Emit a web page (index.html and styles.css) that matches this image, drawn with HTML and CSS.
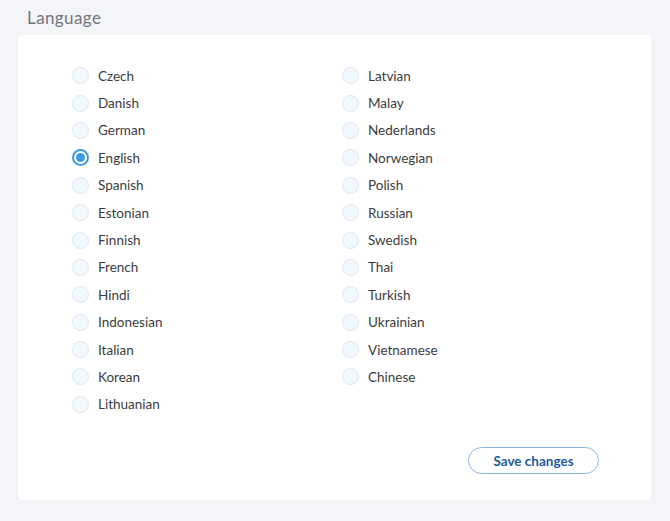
FILE: index.html
```html
<!DOCTYPE html>
<html lang="en">
<head>
  <meta charset="UTF-8" />
  <meta name="viewport" content="width=device-width, initial-scale=1.0"/>
  <title>Language settings</title>
  <link rel="stylesheet" href="styles.css">
</head>
<body>

<h1 class="section-title">Language</h1>

<div class="card">
  <div class="lang-grid">
    <div class="lang-col">
      <label class="lang"><input type="radio" name="lang" value="cs"><span class="dot"></span>Czech</label>
      <label class="lang"><input type="radio" name="lang" value="da"><span class="dot"></span>Danish</label>
      <label class="lang"><input type="radio" name="lang" value="de"><span class="dot"></span>German</label>
      <label class="lang"><input type="radio" name="lang" value="en" checked><span class="dot"></span>English</label>
      <label class="lang"><input type="radio" name="lang" value="es"><span class="dot"></span>Spanish</label>
      <label class="lang"><input type="radio" name="lang" value="et"><span class="dot"></span>Estonian</label>
      <label class="lang"><input type="radio" name="lang" value="fi"><span class="dot"></span>Finnish</label>
      <label class="lang"><input type="radio" name="lang" value="fr"><span class="dot"></span>French</label>
      <label class="lang"><input type="radio" name="lang" value="hi"><span class="dot"></span>Hindi</label>
      <label class="lang"><input type="radio" name="lang" value="id"><span class="dot"></span>Indonesian</label>
      <label class="lang"><input type="radio" name="lang" value="it"><span class="dot"></span>Italian</label>
      <label class="lang"><input type="radio" name="lang" value="ko"><span class="dot"></span>Korean</label>
      <label class="lang"><input type="radio" name="lang" value="lt"><span class="dot"></span>Lithuanian</label>
    </div>
    <div class="lang-col">
      <label class="lang"><input type="radio" name="lang" value="lv"><span class="dot"></span>Latvian</label>
      <label class="lang"><input type="radio" name="lang" value="ms"><span class="dot"></span>Malay</label>
      <label class="lang"><input type="radio" name="lang" value="nl"><span class="dot"></span>Nederlands</label>
      <label class="lang"><input type="radio" name="lang" value="no"><span class="dot"></span>Norwegian</label>
      <label class="lang"><input type="radio" name="lang" value="pl"><span class="dot"></span>Polish</label>
      <label class="lang"><input type="radio" name="lang" value="ru"><span class="dot"></span>Russian</label>
      <label class="lang"><input type="radio" name="lang" value="sv"><span class="dot"></span>Swedish</label>
      <label class="lang"><input type="radio" name="lang" value="th"><span class="dot"></span>Thai</label>
      <label class="lang"><input type="radio" name="lang" value="tr"><span class="dot"></span>Turkish</label>
      <label class="lang"><input type="radio" name="lang" value="uk"><span class="dot"></span>Ukrainian</label>
      <label class="lang"><input type="radio" name="lang" value="vi"><span class="dot"></span>Vietnamese</label>
      <label class="lang"><input type="radio" name="lang" value="zh"><span class="dot"></span>Chinese</label>
    </div>
  </div>

  <div class="actions">
    <button class="btn-outline">Save changes</button>
  </div>
</div>

</body>
</html>
```

FILE: styles.css
```css
body { margin: 0; background: #f4f5f8; font-family: Lato, sans-serif; color: #3b3d42; }
.section-title {
  margin: 0; padding: 7px 0 0 27px; height: 28px;
  font-family: Lato, sans-serif; font-weight: 400; font-size: 17px; letter-spacing: 0.4px; color: #70747d;
}
.card {
  margin: 0 18px; width: 634px; height: 465px; box-sizing: border-box;
  background: #fff; border-radius: 3px; box-shadow: 0 1px 2px rgba(0,0,0,0.13);
  padding: 27px 53px 0 54px;
}
.lang-grid { display: flex; }
.lang-col { width: 270px; flex: none; display: flex; flex-direction: column; }
.lang {
  height: 27.4px; display: flex; align-items: center; gap: 9px;
  font-size: 13.5px; cursor: pointer;
}
.lang input { display: none; }
.dot {
  width: 17px; height: 17px; box-sizing: border-box; border-radius: 50%;
  border: 1px solid #dde6f0; background: #f3f8fe; position: relative;
}
.lang input:checked + .dot { border: 2px solid #3e9be3; background: #fff; }
.lang input:checked + .dot::after {
  content: ""; position: absolute; left: 2px; top: 2px;
  width: 9px; height: 9px; border-radius: 50%; background: #3e9be3;
}
.actions { display: flex; justify-content: flex-end; margin-top: 29px; }
.btn-outline {
  width: 131px; height: 27px; border-radius: 14px;
  border: 1px solid #8ab6e2; background: #fff; color: #1d5c9c;
  font-family: Lato, sans-serif; font-weight: 700; font-size: 13.5px;
}
```
